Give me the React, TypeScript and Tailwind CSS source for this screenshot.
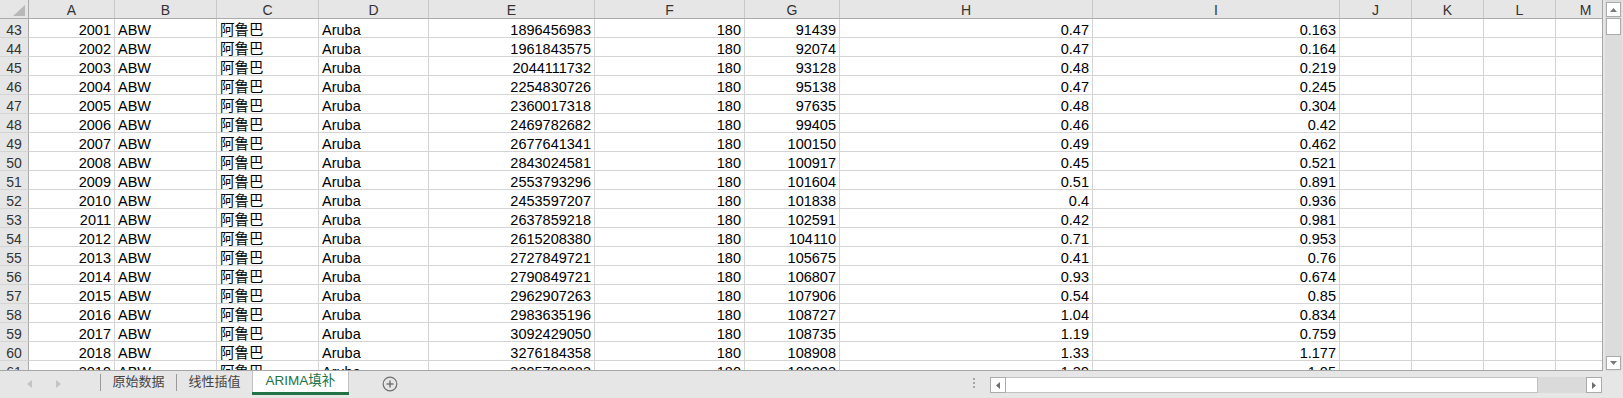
import React from "react";

type Col = { name: string; w: number; align: "left" | "right" };

const cols: Col[] = [
  { name: "A", w: 86, align: "right" },
  { name: "B", w: 102, align: "left" },
  { name: "C", w: 102, align: "left" },
  { name: "D", w: 110, align: "left" },
  { name: "E", w: 166, align: "right" },
  { name: "F", w: 150, align: "right" },
  { name: "G", w: 95, align: "right" },
  { name: "H", w: 253, align: "right" },
  { name: "I", w: 247, align: "right" },
  { name: "J", w: 72, align: "right" },
  { name: "K", w: 72, align: "right" },
  { name: "L", w: 72, align: "right" },
  { name: "M", w: 60, align: "right" },
];

const raw: [string, string, string, string, string, string][] = [
  ["2001", "1896456983", "180", "91439", "0.47", "0.163"],
  ["2002", "1961843575", "180", "92074", "0.47", "0.164"],
  ["2003", "2044111732", "180", "93128", "0.48", "0.219"],
  ["2004", "2254830726", "180", "95138", "0.47", "0.245"],
  ["2005", "2360017318", "180", "97635", "0.48", "0.304"],
  ["2006", "2469782682", "180", "99405", "0.46", "0.42"],
  ["2007", "2677641341", "180", "100150", "0.49", "0.462"],
  ["2008", "2843024581", "180", "100917", "0.45", "0.521"],
  ["2009", "2553793296", "180", "101604", "0.51", "0.891"],
  ["2010", "2453597207", "180", "101838", "0.4", "0.936"],
  ["2011", "2637859218", "180", "102591", "0.42", "0.981"],
  ["2012", "2615208380", "180", "104110", "0.71", "0.953"],
  ["2013", "2727849721", "180", "105675", "0.41", "0.76"],
  ["2014", "2790849721", "180", "106807", "0.93", "0.674"],
  ["2015", "2962907263", "180", "107906", "0.54", "0.85"],
  ["2016", "2983635196", "180", "108727", "1.04", "0.834"],
  ["2017", "3092429050", "180", "108735", "1.19", "0.759"],
  ["2018", "3276184358", "180", "108908", "1.33", "1.177"],
  ["2019", "3395798883", "180", "109203", "1.39", "1.05"],
];

const rows = raw.map((r, i) => ({
  num: 43 + i,
  cells: [r[0], "ABW", "阿鲁巴", "Aruba", r[1], r[2], r[3], r[4], r[5], "", "", "", ""],
}));

const font = { fontFamily: '"Liberation Sans", "Noto Sans CJK SC", sans-serif' };

function HeaderRow() {
  return (
    <div className="flex h-[19px] shrink-0 bg-[#e6e6e6] border-b border-[#ababab]">
      <div className="relative w-[29px] shrink-0 border-r border-[#ababab]">
        <svg className="absolute left-[13px] top-[5px]" width="12" height="11" viewBox="0 0 12 11">
          <polygon points="12,0 12,11 0,11" fill="#b8b8b8" />
        </svg>
      </div>
      {cols.map((c) => (
        <div
          key={c.name}
          style={{ width: c.w }}
          className="shrink-0 border-r border-[#c8c8c8] text-center text-[14px] leading-[18px] pt-[1px] text-[#333]"
        >
          {c.name}
        </div>
      ))}
    </div>
  );
}

function DataRow({ num, cells }: { num: number; cells: string[] }) {
  return (
    <div className="flex h-[19px] shrink-0">
      <div className="w-[29px] shrink-0 bg-[#e6e6e6] border-r border-b border-r-[#ababab] border-b-[#d4d4d4] text-center text-[14px] leading-[18px] pt-[2px] text-[#333]">
        {num}
      </div>
      {cols.map((c, i) => (
        <div
          key={c.name}
          style={{ width: c.w }}
          className={`shrink-0 box-border border-r border-b border-[#d4d4d4] bg-white text-[14.5px] leading-[18px] pt-[2px] whitespace-nowrap text-black ${
            c.align === "right" ? "text-right pr-[3px]" : "text-left pl-[3px]"
          }`}
        >
          {cells[i]}
        </div>
      ))}
    </div>
  );
}

function VScroll() {
  return (
    <div className="w-[20px] h-[371px] shrink-0 bg-[#e6e6e6] flex flex-col items-center">
      <div className="w-[17px] h-[371px] bg-[#dcdcdc] flex flex-col items-center pt-[2px]">
        <div className="w-[15px] h-[15px] bg-white border border-[#ababab] flex items-center justify-center">
          <svg width="7" height="4" viewBox="0 0 7 4">
            <polygon points="3.5,0 7,4 0,4" fill="#7a7a7a" />
          </svg>
        </div>
        <div className="w-[15px] h-[17px] mt-[1px] bg-white border border-[#ababab]" />
        <div className="flex-1" />
        <div className="w-[15px] h-[14px] mb-[1px] bg-white border border-[#ababab] flex items-center justify-center">
          <svg width="7" height="4" viewBox="0 0 7 4">
            <polygon points="0,0 7,0 3.5,4" fill="#7a7a7a" />
          </svg>
        </div>
      </div>
    </div>
  );
}

function BottomBar() {
  return (
    <div className="flex h-[27px] bg-[#e6e6e6] items-start">
      <div className="relative w-[100px] h-[22px] shrink-0">
        <svg className="absolute left-[27px] top-[9px]" width="5" height="8" viewBox="0 0 5 8">
          <polygon points="5,0 5,8 0,4" fill="#c4c4c4" />
        </svg>
        <svg className="absolute left-[56px] top-[9px]" width="5" height="8" viewBox="0 0 5 8">
          <polygon points="0,0 0,8 5,4" fill="#c4c4c4" />
        </svg>
      </div>
      <div className="w-px h-[17px] mt-[3px] bg-[#9a9a9a] shrink-0" />
      <div className="w-[75px] h-[22px] shrink-0 flex items-center justify-center text-[13px] text-[#444]">
        原始数据
      </div>
      <div className="w-px h-[17px] mt-[3px] bg-[#9a9a9a] shrink-0" />
      <div className="w-[75px] h-[22px] shrink-0 flex items-center justify-center text-[13px] text-[#444]">
        线性插值
      </div>
      <div className="w-[97px] h-[24px] shrink-0 bg-white border-l border-r border-[#c2c2c2] flex flex-col">
        <div className="flex-1 flex items-center justify-center text-[13.5px] text-[#217346]">ARIMA填补</div>
        <div className="h-[3px] bg-[#217346] -mx-px" />
      </div>
      <div className="ml-[33px] mt-[5px] shrink-0">
        <svg width="16" height="16" viewBox="0 0 16 16">
          <circle cx="8" cy="8" r="6.8" fill="none" stroke="#6e6e6e" strokeWidth="1.2" />
          <line x1="4.5" y1="8" x2="11.5" y2="8" stroke="#6e6e6e" strokeWidth="1.4" />
          <line x1="8" y1="4.5" x2="8" y2="11.5" stroke="#6e6e6e" strokeWidth="1.4" />
        </svg>
      </div>
      <div className="flex-1" />
      <div className="flex flex-col gap-[2px] mt-[7px] shrink-0">
        <div className="w-[2px] h-[2px] bg-[#a6a6a6]" />
        <div className="w-[2px] h-[2px] bg-[#a6a6a6]" />
        <div className="w-[2px] h-[2px] bg-[#a6a6a6]" />
      </div>
      <div className="ml-[15px] mt-[6px] w-[612px] h-[16px] shrink-0 flex">
        <div className="w-[16px] h-[16px] bg-white border border-[#ababab] flex items-center justify-center shrink-0">
          <svg width="4" height="7" viewBox="0 0 4 7">
            <polygon points="4,0 4,7 0,3.5" fill="#6e6e6e" />
          </svg>
        </div>
        <div className="w-[532px] h-[16px] bg-white border border-[#c2c2c2] border-l-0 shrink-0" />
        <div className="flex-1 bg-[#dadada]" />
        <div className="w-[16px] h-[16px] bg-white border border-[#ababab] flex items-center justify-center shrink-0">
          <svg width="4" height="7" viewBox="0 0 4 7">
            <polygon points="0,0 0,7 4,3.5" fill="#6e6e6e" />
          </svg>
        </div>
      </div>
      <div className="w-[21px] shrink-0" />
    </div>
  );
}

export default function App() {
  return (
    <div className="w-[1623px] h-[398px] overflow-hidden bg-[#e6e6e6] flex flex-col" style={font}>
      <div className="flex h-[371px] shrink-0">
        <div className="w-[1603px] h-[371px] shrink-0 overflow-hidden border-r border-b border-[#a6a6a6] bg-white flex flex-col">
          <HeaderRow />
          {rows.map((r) => (
            <DataRow key={r.num} num={r.num} cells={r.cells} />
          ))}
        </div>
        <VScroll />
      </div>
      <BottomBar />
    </div>
  );
}
